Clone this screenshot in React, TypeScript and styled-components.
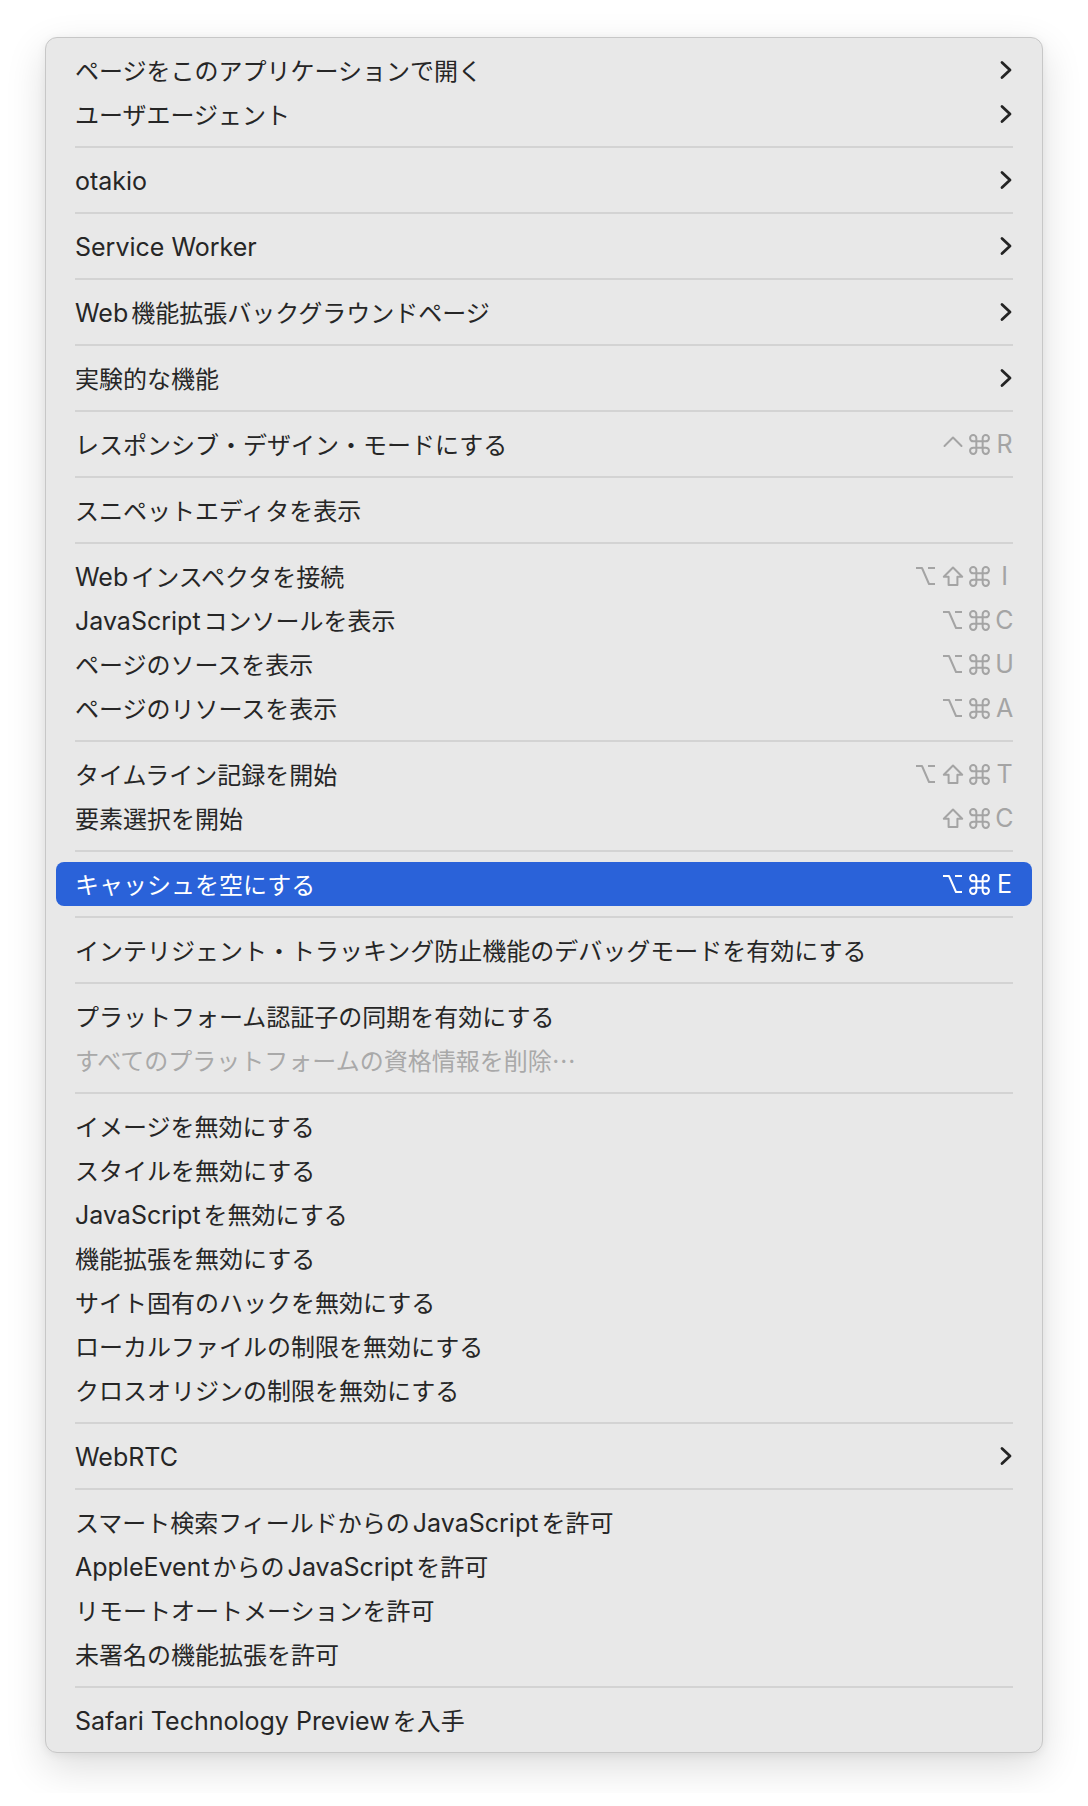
import React from 'react';
import styled, { createGlobalStyle, css } from 'styled-components';

// plain macOS-style context menu (Safari "開発" menu)

const GlobalStyle = createGlobalStyle`
  html, body {
    margin: 0;
    padding: 0;
    background: #ffffff;
  }
  body {
    font-family: "Noto Sans CJK JP", "Noto Sans", sans-serif;
    -webkit-font-smoothing: antialiased;
  }
`;

type ModName = 'ctrl' | 'opt' | 'shift' | 'cmd';

interface MenuItem {
  label: string;
  mods?: ModName[];
  keyChar?: string;
  submenu?: boolean;
  disabled?: boolean;
  active?: boolean;
}

const groups: MenuItem[][] = [
  [
    { label: 'ページをこのアプリケーションで開く', submenu: true },
    { label: 'ユーザエージェント', submenu: true },
  ],
  [{ label: 'otakio', submenu: true }],
  [{ label: 'Service Worker', submenu: true }],
  [{ label: 'Web機能拡張バックグラウンドページ', submenu: true }],
  [{ label: '実験的な機能', submenu: true }],
  [{ label: 'レスポンシブ・デザイン・モードにする', mods: ['ctrl', 'cmd'], keyChar: 'R' }],
  [{ label: 'スニペットエディタを表示' }],
  [
    { label: 'Webインスペクタを接続', mods: ['opt', 'shift', 'cmd'], keyChar: 'I' },
    { label: 'JavaScriptコンソールを表示', mods: ['opt', 'cmd'], keyChar: 'C' },
    { label: 'ページのソースを表示', mods: ['opt', 'cmd'], keyChar: 'U' },
    { label: 'ページのリソースを表示', mods: ['opt', 'cmd'], keyChar: 'A' },
  ],
  [
    { label: 'タイムライン記録を開始', mods: ['opt', 'shift', 'cmd'], keyChar: 'T' },
    { label: '要素選択を開始', mods: ['shift', 'cmd'], keyChar: 'C' },
  ],
  [{ label: 'キャッシュを空にする', mods: ['opt', 'cmd'], keyChar: 'E', active: true }],
  [{ label: 'インテリジェント・トラッキング防止機能のデバッグモードを有効にする' }],
  [
    { label: 'プラットフォーム認証子の同期を有効にする' },
    { label: 'すべてのプラットフォームの資格情報を削除…', disabled: true },
  ],
  [
    { label: 'イメージを無効にする' },
    { label: 'スタイルを無効にする' },
    { label: 'JavaScriptを無効にする' },
    { label: '機能拡張を無効にする' },
    { label: 'サイト固有のハックを無効にする' },
    { label: 'ローカルファイルの制限を無効にする' },
    { label: 'クロスオリジンの制限を無効にする' },
  ],
  [{ label: 'WebRTC', submenu: true }],
  [
    { label: 'スマート検索フィールドからのJavaScriptを許可' },
    { label: 'AppleEventからのJavaScriptを許可' },
    { label: 'リモートオートメーションを許可' },
    { label: '未署名の機能拡張を許可' },
  ],
  [{ label: 'Safari Technology Previewを入手' }],
];

const Page = styled.div`
  padding: 37px 0 40px 45px;
`;

const Menu = styled.div`
  box-sizing: border-box;
  width: 998px;
  padding: 10px;
  background: #e8e8e8;
  border: 1px solid #c7c7c7;
  border-radius: 12px;
  box-shadow: 0 14px 40px rgba(0, 0, 0, 0.14), 0 2px 10px rgba(0, 0, 0, 0.06);
`;

const Row = styled.div<{ $active?: boolean; $disabled?: boolean }>`
  display: flex;
  align-items: center;
  height: 44px;
  padding: 0 18px 0 19px;
  border-radius: 8px;
  color: #262626;
  ${(p) =>
    p.$active &&
    css`
      background: #2a62d9;
      color: #ffffff;
    `}
  ${(p) =>
    p.$disabled &&
    css`
      color: #a9a9a9;
    `}
`;

const Label = styled.span`
  flex: 1;
  font-size: 24px;
  white-space: nowrap;
  line-height: 44px;
`;

const Latin = styled.span<{ $before?: boolean; $after?: boolean }>`
  font-family: Inter, "Noto Sans", sans-serif;
  font-size: 25px;
  margin-left: ${(p) => (p.$before ? '3px' : '0')};
  margin-right: ${(p) => (p.$after ? '3px' : '0')};
`;

const Shortcut = styled.span<{ $active?: boolean }>`
  display: flex;
  align-items: center;
  color: ${(p) => (p.$active ? '#ffffff' : '#a4a4a4')};
`;

const Mod = styled.span`
  display: flex;
  align-items: center;
  justify-content: center;
  width: 27px;
  height: 44px;
`;

const KeyChar = styled.span`
  width: 19px;
  margin-left: 2px;
  text-align: center;
  font-family: Inter, sans-serif;
  font-size: 25px;
`;

const Separator = styled.div`
  height: 2px;
  margin: 10px 19px;
  background: #d3d3d3;
`;

// modifier glyphs, drawn so they keep the weight of the macOS key symbols
const ModIcon: React.FC<{ name: ModName }> = ({ name }) => {
  const common = {
    fill: 'none',
    stroke: 'currentColor',
    strokeWidth: 2,
    strokeLinejoin: 'round' as const,
  };
  switch (name) {
    case 'ctrl':
      return (
        <svg width="20" height="20" viewBox="0 0 20 20">
          <path d="M1.5 12 L10 3.5 L18.5 12" {...common} strokeLinecap="round" />
        </svg>
      );
    case 'opt':
      return (
        <svg width="21" height="20" viewBox="0 0 21 20">
          <path d="M1 2 H7 L14 18 H20" {...common} />
          <path d="M13 2 H20" {...common} />
        </svg>
      );
    case 'shift':
      return (
        <svg width="22" height="21" viewBox="0 0 22 21">
          <path d="M11 1.5 L1.8 10.8 H6.6 V19 H15.4 V10.8 H20.2 Z" {...common} />
        </svg>
      );
    case 'cmd':
    default:
      return (
        <svg width="21" height="21" viewBox="2 2 20 20">
          <path
            d="M15 6v12a3 3 0 1 0 3-3H6a3 3 0 1 0 3 3V6a3 3 0 1 0-3 3h12a3 3 0 1 0-3-3"
            {...common}
            strokeWidth={1.9}
          />
        </svg>
      );
  }
};

const Chevron: React.FC = () => (
  <svg width="14" height="20" viewBox="0 0 14 20" style={{ marginRight: '1px' }}>
    <path
      d="M3 2.5 L11 10 L3 17.5"
      fill="none"
      stroke="#242424"
      strokeWidth="2.8"
      strokeLinecap="round"
      strokeLinejoin="round"
    />
  </svg>
);

// split a label into latin / japanese runs, so the latin part gets its own size
// and the small gap macOS puts between the two scripts
const renderLabel = (text: string) => {
  const parts = text.split(/([A-Za-z0-9](?:[A-Za-z0-9 .]*[A-Za-z0-9])?)/).filter((s) => s !== '');
  return parts.map((part, i) => {
    if (/^[A-Za-z0-9]/.test(part)) {
      return (
        <Latin key={i} $before={i > 0} $after={i < parts.length - 1}>
          {part}
        </Latin>
      );
    }
    return <React.Fragment key={i}>{part}</React.Fragment>;
  });
};

const MenuRow: React.FC<{ item: MenuItem }> = ({ item }) => (
  <Row $active={item.active} $disabled={item.disabled}>
    <Label>{renderLabel(item.label)}</Label>
    {item.keyChar && (
      <Shortcut $active={item.active}>
        {item.mods?.map((m, i) => (
          <Mod key={i}>
            <ModIcon name={m} />
          </Mod>
        ))}
        <KeyChar>{item.keyChar}</KeyChar>
      </Shortcut>
    )}
    {item.submenu && <Chevron />}
  </Row>
);

export default function App() {
  return (
    <>
      <GlobalStyle />
      <Page>
        <Menu>
          {groups.map((group, gi) => (
            <React.Fragment key={gi}>
              {gi > 0 && <Separator />}
              {group.map((item, ii) => (
                <MenuRow key={ii} item={item} />
              ))}
            </React.Fragment>
          ))}
        </Menu>
      </Page>
    </>
  );
}
